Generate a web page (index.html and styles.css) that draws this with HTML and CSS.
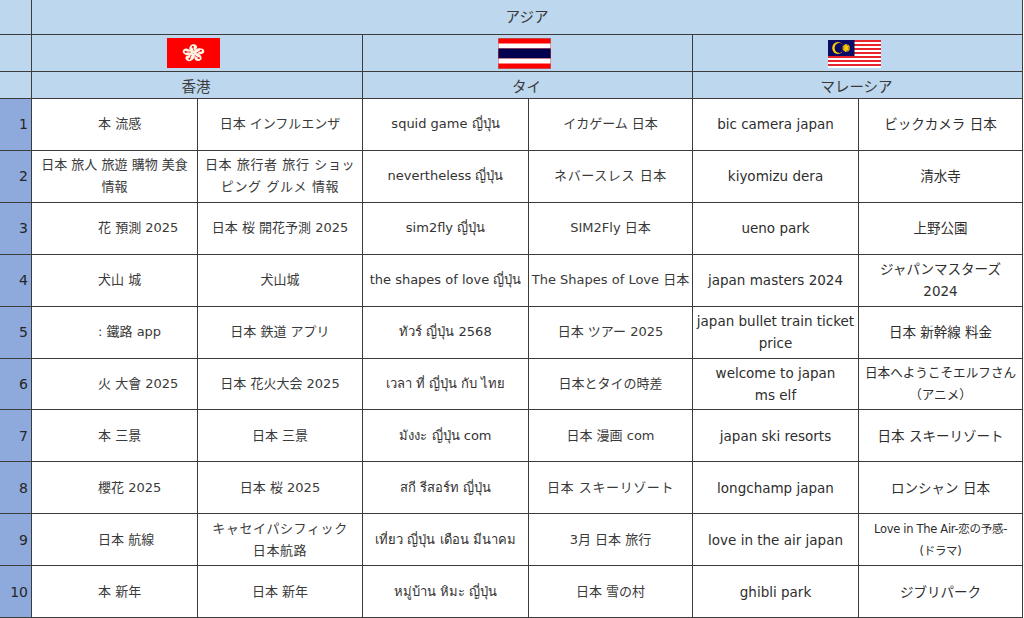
FILE: index.html
```html
<!DOCTYPE html>
<html lang="ja">
<head>
<meta charset="utf-8">
<title>アジア</title>
<link rel="stylesheet" href="styles.css">
</head>
<body>
<div class="sheet">
  <div class="corner"></div>
  <div class="hdr region">アジア</div>

  <div class="corner"></div>
  <div class="hdr flagcell span2">
    <svg class="flag" width="53" height="30" viewBox="0 0 53 30">
      <defs>
        <g id="petal">
          <path d="M0,0 C-3.6,-1.4 -4.6,-6.2 -1.6,-8.6 C1,-9.8 3.8,-7.6 2.6,-5 C1.6,-3.4 0.6,-2 0,0 Z" fill="#fff6e6"/>
          <path d="M0.4,-2.4 L-0.6,-6.2" stroke="#e00" stroke-width="0.6"/>
          <circle cx="-0.6" cy="-6.4" r="0.9" fill="#e00"/>
        </g>
      </defs>
      <rect width="53" height="30" fill="#ff0000"/>
      <g transform="translate(26.5,15.3) scale(1.25,1)">
        <use href="#petal"/>
        <use href="#petal" transform="rotate(72)"/>
        <use href="#petal" transform="rotate(144)"/>
        <use href="#petal" transform="rotate(216)"/>
        <use href="#petal" transform="rotate(288)"/>
      </g>
    </svg>
  </div>
  <div class="hdr flagcell span2">
    <svg class="flag" width="53" height="31" viewBox="0 0 53 31">
      <rect x="0" y="0" width="53" height="31" fill="#8a8a8a"/>
      <rect x="0.5" y="0.5" width="52" height="30" fill="#ff0000"/>
      <rect x="0.5" y="5.5" width="52" height="5" fill="#ffffff"/>
      <rect x="0.5" y="10.5" width="52" height="10" fill="#00004f"/>
      <rect x="0.5" y="20.5" width="52" height="5" fill="#ffffff"/>
    </svg>
  </div>
  <div class="hdr flagcell span2">
    <svg class="flag my" width="53" height="28" viewBox="0 0 28 14" preserveAspectRatio="none">
      <rect width="28" height="14" fill="#ffffff"/>
      <rect y="0" width="28" height="1" fill="#e8232b"/>
      <rect y="2" width="28" height="1" fill="#e8232b"/>
      <rect y="4" width="28" height="1" fill="#e8232b"/>
      <rect y="6" width="28" height="1" fill="#e8232b"/>
      <rect y="8" width="28" height="1" fill="#e8232b"/>
      <rect y="10" width="28" height="1" fill="#e8232b"/>
      <rect y="12" width="28" height="1" fill="#e8232b"/>
      <rect width="14" height="8" fill="#0b0b66"/>
      <circle cx="5.2" cy="4" r="3" fill="#ffcc00"/>
      <circle cx="6" cy="4" r="2.5" fill="#0b0b66"/>
      <g transform="translate(9.6,4)" stroke="#ffcc00" stroke-width="0.55">
        <line x1="-2" y1="0" x2="2" y2="0"/>
        <line x1="-2" y1="0" x2="2" y2="0" transform="rotate(25.7)"/>
        <line x1="-2" y1="0" x2="2" y2="0" transform="rotate(51.4)"/>
        <line x1="-2" y1="0" x2="2" y2="0" transform="rotate(77.1)"/>
        <line x1="-2" y1="0" x2="2" y2="0" transform="rotate(102.9)"/>
        <line x1="-2" y1="0" x2="2" y2="0" transform="rotate(128.6)"/>
        <line x1="-2" y1="0" x2="2" y2="0" transform="rotate(154.3)"/>
      </g>
      <circle cx="9.6" cy="4" r="0.9" fill="#ffcc00"/>
    </svg>
  </div>

  <div class="corner"></div>
  <div class="hdr country span2">香港</div>
  <div class="hdr country span2">タイ</div>
  <div class="hdr country span2">マレーシア</div>

  <div class="num">1</div>
  <div class="c hk1">本 流感</div>
  <div class="c jp">日本 インフルエンザ</div>
  <div class="c">squid game ญี่ปุ่น</div>
  <div class="c jp">イカゲーム 日本</div>
  <div class="c my1">bic camera japan</div>
  <div class="c my2">ビックカメラ 日本</div>

  <div class="num">2</div>
  <div class="c jp">日本 旅人 旅遊 購物 美食<br>情報</div>
  <div class="c jp wide">日本 旅行者 旅行 ショッ<br>ピング グルメ 情報</div>
  <div class="c">nevertheless ญี่ปุ่น</div>
  <div class="c jp wide">ネバースレス 日本</div>
  <div class="c my1">kiyomizu dera</div>
  <div class="c my2">清水寺</div>

  <div class="num">3</div>
  <div class="c hk1">花 預測 2025</div>
  <div class="c jp">日本 桜 開花予測 2025</div>
  <div class="c">sim2fly ญี่ปุ่น</div>
  <div class="c jp">SIM2Fly 日本</div>
  <div class="c my1">ueno park</div>
  <div class="c my2">上野公園</div>

  <div class="num">4</div>
  <div class="c hk1">犬山 城</div>
  <div class="c jp">犬山城</div>
  <div class="c">the shapes of love ญี่ปุ่น</div>
  <div class="c jp">The Shapes of Love 日本</div>
  <div class="c my1">japan masters 2024</div>
  <div class="c my2">ジャパンマスターズ<br>2024</div>

  <div class="num">5</div>
  <div class="c hk1">: 鐵路 app</div>
  <div class="c jp">日本 鉄道 アプリ</div>
  <div class="c">ทัวร์ ญี่ปุ่น 2568</div>
  <div class="c jp">日本 ツアー 2025</div>
  <div class="c my1">japan bullet train ticket<br>price</div>
  <div class="c my2">日本 新幹線 料金</div>

  <div class="num">6</div>
  <div class="c hk1">火 大會 2025</div>
  <div class="c jp">日本 花火大会 2025</div>
  <div class="c">เวลา ที่ ญี่ปุ่น กับ ไทย</div>
  <div class="c jp">日本とタイの時差</div>
  <div class="c my1">welcome to japan<br>ms elf</div>
  <div class="c my2 tight">日本へようこそエルフさん<br>（アニメ）</div>

  <div class="num">7</div>
  <div class="c hk1">本 三景</div>
  <div class="c jp">日本 三景</div>
  <div class="c">มังงะ ญี่ปุ่น com</div>
  <div class="c jp">日本 漫画 com</div>
  <div class="c my1">japan ski resorts</div>
  <div class="c my2">日本 スキーリゾート</div>

  <div class="num">8</div>
  <div class="c hk1">櫻花 2025</div>
  <div class="c jp">日本 桜 2025</div>
  <div class="c">สกี รีสอร์ท ญี่ปุ่น</div>
  <div class="c jp wide">日本 スキーリゾート</div>
  <div class="c my1">longchamp japan</div>
  <div class="c my2">ロンシャン 日本</div>

  <div class="num">9</div>
  <div class="c hk1">日本 航線</div>
  <div class="c jp wide">キャセイパシフィック<br>日本航路</div>
  <div class="c">เที่ยว ญี่ปุ่น เดือน มีนาคม</div>
  <div class="c jp">3月 日本 旅行</div>
  <div class="c my1">love in the air japan</div>
  <div class="c my2 small">Love in The Air-恋の予感-<br>(ドラマ)</div>

  <div class="num">10</div>
  <div class="c hk1">本 新年</div>
  <div class="c jp">日本 新年</div>
  <div class="c">หมู่บ้าน หิมะ ญี่ปุ่น</div>
  <div class="c jp">日本 雪の村</div>
  <div class="c my1">ghibli park</div>
  <div class="c my2">ジブリパーク</div>
</div>
</body>
</html>
```

FILE: styles.css
```css
html, body {
  margin: 0;
  padding: 0;
  background: #ffffff;
}

.sheet {
  box-sizing: border-box;
  width: 1023px;
  height: 618px;
  padding: 0 1px 1px 0;
  display: grid;
  grid-template-columns: 31px 165px 164px 165px 163px 165px 163px;
  grid-template-rows: 34px 36px 26px repeat(10, 1fr);
  gap: 1px;
  background: #3c3c3c;
  font-family: "DejaVu Sans", "Noto Sans CJK JP", sans-serif;
  font-size: 13px;
  color: #333333;
}

.corner {
  background: #bdd7ee;
}

.hdr {
  background: #bdd7ee;
  display: flex;
  align-items: center;
  justify-content: center;
  font-family: "Noto Sans CJK JP", sans-serif;
  font-size: 14.5px;
  color: #3a3a3a;
}

.region {
  grid-column: 2 / 8;
  padding-bottom: 4px;
}

.span2 {
  grid-column: span 2;
}

.flagcell {
  padding-right: 7px;
}

.flag {
  display: block;
}

.flag.my {
  margin-top: 2px;
}

.country {
  padding-right: 2px;
}

.num {
  background: #8ea9db;
  display: flex;
  align-items: center;
  justify-content: flex-end;
  padding-right: 3px;
  font-size: 14px;
  color: #262626;
}

.c {
  background: #ffffff;
  display: flex;
  align-items: center;
  justify-content: center;
  text-align: center;
  line-height: 22px;
  white-space: nowrap;
}

.jp {
  color: #3a3a3a;
}

.wide {
  letter-spacing: 0.6px;
}

.hk1 {
  justify-content: flex-start;
  text-align: left;
  padding-left: 66px;
  color: #3a3a3a;
}

.my1 {
  font-size: 13.5px;
  color: #2e2e2e;
}

.my2 {
  font-size: 13.5px;
  color: #2e2e2e;
}

.my2.tight {
  font-size: 12.6px;
}

.my2.small {
  font-size: 11.5px;
  letter-spacing: -0.3px;
}
```
